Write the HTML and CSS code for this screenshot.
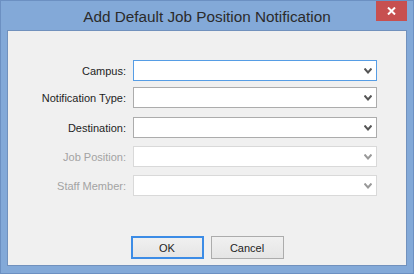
FILE: index.html
```html
<!DOCTYPE html>
<html lang="en">
<head>
  <meta charset="UTF-8">
  <meta name="viewport" content="width=device-width, initial-scale=1.0">
  <title>Add Default Job Position Notification</title>
  <link rel="stylesheet" href="styles.css">
</head>
<body>
  <div class="window">
    <div class="titlebar">
      <span></span>
      <span class="title">Add Default Job Position Notification</span>
      <button class="close">
        <svg width="9" height="8" viewBox="0 0 9 8"><path d="M1 0.5 L8 7.5 M8 0.5 L1 7.5" stroke="#fff" stroke-width="2"/></svg>
      </button>
    </div>
    <div class="content">
      <div class="form">
        <div class="row row-1">
          <label class="label">Campus:</label>
          <div class="combo focused"><svg class="arrow" width="8" height="6" viewBox="0 0 8 6"><path d="M0.5 0.5 L4 4.5 L7.5 0.5" fill="none" stroke="#555" stroke-width="2"/></svg></div>
        </div>
        <div class="row row-2">
          <label class="label">Notification Type:</label>
          <div class="combo"><svg class="arrow" width="8" height="6" viewBox="0 0 8 6"><path d="M0.5 0.5 L4 4.5 L7.5 0.5" fill="none" stroke="#555" stroke-width="2"/></svg></div>
        </div>
        <div class="row row-3">
          <label class="label">Destination:</label>
          <div class="combo"><svg class="arrow" width="8" height="6" viewBox="0 0 8 6"><path d="M0.5 0.5 L4 4.5 L7.5 0.5" fill="none" stroke="#555" stroke-width="2"/></svg></div>
        </div>
        <div class="row row-4 disabled">
          <label class="label">Job Position:</label>
          <div class="combo"><svg class="arrow" width="8" height="6" viewBox="0 0 8 6"><path d="M0.5 0.5 L4 4.5 L7.5 0.5" fill="none" stroke="#999" stroke-width="2"/></svg></div>
        </div>
        <div class="row row-5 disabled">
          <label class="label">Staff Member:</label>
          <div class="combo"><svg class="arrow" width="8" height="6" viewBox="0 0 8 6"><path d="M0.5 0.5 L4 4.5 L7.5 0.5" fill="none" stroke="#999" stroke-width="2"/></svg></div>
        </div>
      </div>
      <div class="buttons">
        <button class="btn default">OK</button>
        <button class="btn">Cancel</button>
      </div>
    </div>
  </div>
</body>
</html>
```
FILE: styles.css
```css
*{
  padding: 0;
  margin: 0;
  box-sizing: border-box;
}
body{
  font-family: "Liberation Sans", Arial, sans-serif;
  background: #fff;
}
button{
  border: none;
  font-family: inherit;
  cursor: pointer;
}
.window{
  width: 414px;
  height: 274px;
  background: #83a9d8;
  border: 1px solid #6c90c2;
  display: flex;
  flex-direction: column;
  padding: 0 6px 7px 6px;
}
.titlebar{
  height: 29px;
  display: grid;
  grid-template-columns: 1fr auto 1fr;
}
.title{
  font-size: 15.3px;
  color: #2b2b2b;
  line-height: 29px;
  padding-top: 1px;
}
.close{
  justify-self: end;
  width: 31px;
  height: 20px;
  background: #c75050;
  display: flex;
  justify-content: center;
  align-items: center;
}
.content{
  flex: 1;
  background: #f0f0f0;
  border: 1px solid #7191bd;
  display: flex;
  flex-direction: column;
}
.form{
  flex: 1;
  padding-top: 29px;
}
.row{
  display: flex;
  align-items: center;
}
.row-2{ margin-top: 6px; }
.row-3{ margin-top: 9px; }
.row-4{ margin-top: 8px; }
.row-5{ margin-top: 8px; }
.label{
  width: 118px;
  text-align: right;
  font-size: 11px;
  color: #1e1e1e;
  margin-right: 7px;
}
.combo{
  width: 244px;
  height: 21px;
  background: #fff;
  border: 1px solid #acacac;
  display: flex;
  justify-content: flex-end;
  align-items: center;
  padding-right: 4px;
}
.combo.focused{
  border-color: #569de5;
}
.disabled .label{
  color: #a3a3a3;
}
.disabled .combo{
  border-color: #d9d9d9;
}
.buttons{
  display: flex;
  justify-content: center;
  gap: 7px;
  padding-bottom: 6px;
}
.btn{
  width: 73px;
  height: 23px;
  font-size: 11px;
  color: #1e1e1e;
  border: 1px solid #acacac;
  background: linear-gradient(#f0f0f0, #e5e5e5);
}
.btn.default{
  border: 2px solid #3c8ce6;
}
```
